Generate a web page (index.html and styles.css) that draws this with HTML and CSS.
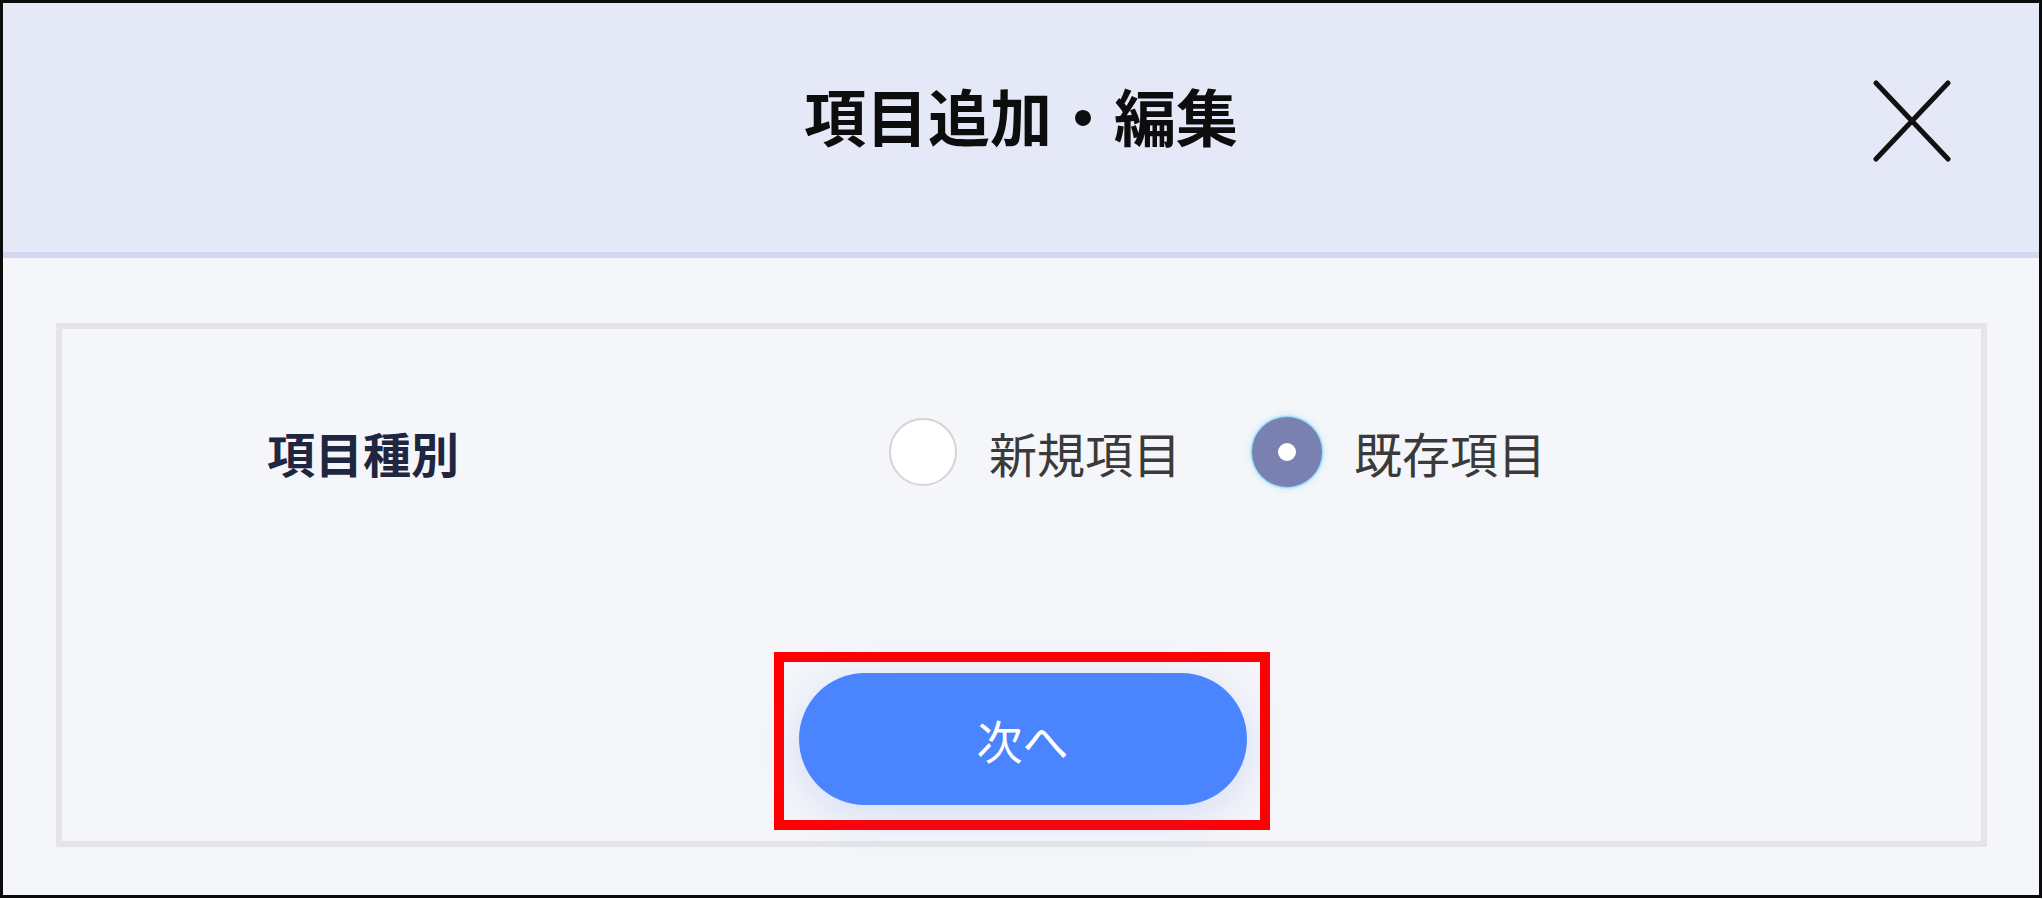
FILE: index.html
```html
<!DOCTYPE html>
<html lang="ja">
<head>
<meta charset="utf-8">
<title>項目追加・編集</title>
<link rel="stylesheet" href="styles.css">
</head>
<body>
<div class="frame">
  <header class="header">
    <h1 class="title">項目追加・編集</h1>
    <button class="close" aria-label="閉じる">
      <svg width="78" height="82" viewBox="0 0 78 82">
        <path d="M3 3 L75 79 M75 3 L3 79" stroke="#111" stroke-width="5" stroke-linecap="round" fill="none"/>
      </svg>
    </button>
  </header>
  <main class="content">
    <section class="box">
      <div class="row">
        <div class="label">項目種別</div>
        <div class="options">
          <label class="option">
            <span class="radio"></span>
            <span class="opt-text">新規項目</span>
          </label>
          <label class="option option-checked">
            <span class="radio radio-checked"><span class="dot"></span></span>
            <span class="opt-text">既存項目</span>
          </label>
        </div>
      </div>
      <div class="actions">
        <div class="highlight">
          <button class="next">次へ</button>
        </div>
      </div>
    </section>
  </main>
</div>
</body>
</html>
```

FILE: styles.css
```css
html, body {
  margin: 0;
  padding: 0;
  background: #ffffff;
}

body {
  font-family: "Noto Sans CJK JP", "Noto Sans", sans-serif;
}

.frame {
  box-sizing: border-box;
  width: 2042px;
  height: 898px;
  border: 3px solid #0c0c0c;
  background: #f5f6fa;
  display: flex;
  flex-direction: column;
}

.header {
  position: relative;
  flex: none;
  background: #e5e8f6;
  border-bottom: 6px solid #d4d7ef;
  display: flex;
  align-items: center;
  justify-content: center;
  padding-bottom: 26px;
  box-sizing: content-box;
  height: 223px;
}

.title {
  margin: 0;
  font-size: 62px;
  line-height: 1;
  font-weight: 700;
  color: #0d0d0d;
}

.close {
  position: absolute;
  top: 77px;
  right: 88px;
  width: 78px;
  height: 82px;
  padding: 0;
  border: 0;
  background: transparent;
  display: block;
}

.close svg {
  display: block;
}

.content {
  flex: 1;
  padding: 65px 52px 0 53px;
}

.box {
  box-sizing: border-box;
  height: 524px;
  border: 6px solid #e5e5e8;
  padding: 88px 0 11px 0;
  display: flex;
  flex-direction: column;
}

.row {
  display: flex;
  align-items: center;
  height: 70px;
  padding-left: 205px;
}

.label {
  width: 622px;
  font-size: 48px;
  font-weight: 700;
  color: #1e2640;
  line-height: 1;
}

.options {
  display: flex;
  align-items: center;
  gap: 71px;
}

.option {
  display: flex;
  align-items: center;
  gap: 32px;
}

.radio {
  box-sizing: border-box;
  width: 68px;
  height: 68px;
  border-radius: 50%;
  border: 2px solid #d4d4d4;
  background: #ffffff;
  display: flex;
  align-items: center;
  justify-content: center;
}

.radio-checked {
  width: 70px;
  height: 70px;
  border: 0;
  background: #7a80b0;
  box-shadow: 0 0 2px 1px #6fd4f4, 0 0 10px rgba(100, 200, 240, 0.35);
}

.dot {
  width: 18px;
  height: 18px;
  border-radius: 50%;
  background: #ffffff;
}

.opt-text {
  font-size: 48px;
  line-height: 1;
  color: #3a3a3a;
}

.actions {
  margin-top: 165px;
  display: flex;
  justify-content: center;
}

.highlight {
  border: 10px solid #ff0000;
  padding: 11px 13px 15px 15px;
}

.next {
  display: block;
  width: 448px;
  height: 132px;
  border: 0;
  border-radius: 66px;
  background: #4a84ff;
  color: #ffffff;
  font-family: "Noto Sans CJK JP", "Noto Sans", sans-serif;
  font-size: 46px;
  font-weight: 400;
  line-height: 1;
  box-shadow: 0 10px 44px rgba(80, 120, 230, 0.2);
  padding: 0;
}
```
